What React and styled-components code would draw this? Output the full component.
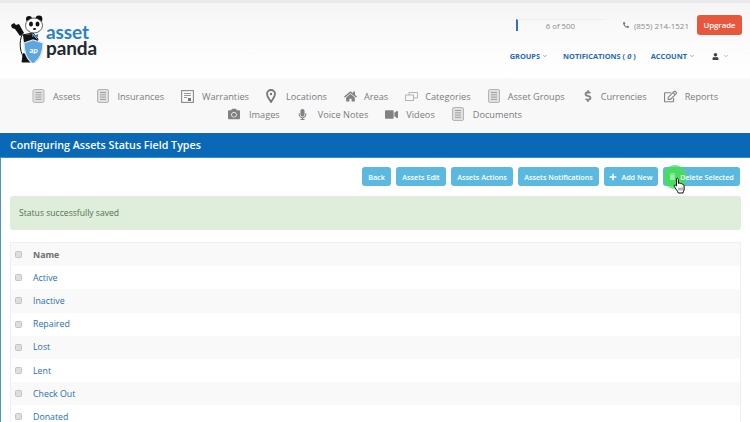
import React from 'react';
import styled, { createGlobalStyle } from 'styled-components';
import {
  FaCamera,
  FaDollarSign,
  FaHome,
  FaMicrophone,
  FaPhoneAlt,
  FaPlus,
  FaRegEdit,
  FaTrash,
  FaUser,
  FaVideo,
} from 'react-icons/fa';
import { FiChevronDown } from 'react-icons/fi';

const GlobalStyle = createGlobalStyle`
  html, body {
    margin: 0;
    height: 422px;
    overflow: hidden;
    background: #fff;
    font-family: "Open Sans", "Liberation Sans", sans-serif;
    color: #666;
  }
  * { box-sizing: border-box; }
`;

const Page = styled.div`
  width: 750px;
  height: 422px;
  overflow: hidden;
  display: flex;
  flex-direction: column;
`;

const TopStrip = styled.div`
  flex: none;
  height: 3px;
  background: #e9e9e9;
`;

const Header = styled.header`
  flex: none;
  height: 75px;
  display: flex;
  justify-content: space-between;
  padding: 12px 8px 0 10px;
  background: linear-gradient(#f5f5f6, #fdfdfd 70%, #fff);
`;

const Logo = styled.div`
  display: flex;
  align-items: flex-start;
`;

const LogoWords = styled.div`
  display: flex;
  flex-direction: column;
  margin: 9px 0 0 -5px;
  font-family: "Lato", "Open Sans", sans-serif;
  font-weight: 700;
  font-size: 19px;
  line-height: 16px;
  letter-spacing: -0.1px;
`;

const LogoWord = styled.div`
  height: 16px;
  color: ${p => p.$color};
`;

const HeaderRight = styled.div`
  display: flex;
  flex-direction: column;
  align-items: flex-end;
`;

const StatusRow = styled.div`
  display: flex;
  align-items: center;
  height: 20px;
`;

const Quota = styled.div`
  width: 90px;
  height: 12px;
  display: flex;
  justify-content: center;
  align-items: center;
  border-left: 2px solid #2a74b8;
  border-top: 1px solid #f0f0f0;
  font-size: 7.8px;
  color: #8a8a8a;
  padding-right: 3px;
`;

const Phone = styled.div`
  display: flex;
  align-items: center;
  gap: 5px;
  margin-left: 17px;
  font-size: 8px;
  color: #8a8a8a;
  svg { width: 6px; height: 6px; color: #777; }
`;

const UpgradeButton = styled.button`
  width: 45px;
  height: 20px;
  margin-left: 8px;
  padding: 0;
  border: 0;
  border-radius: 3px;
  background: #e8573c;
  color: #fff;
  font: 600 7.8px "Open Sans", sans-serif;
`;

const AccountRow = styled.nav`
  display: flex;
  align-items: center;
  height: 12px;
  margin-top: 15px;
  color: #1f6bb0;
  font-size: 7.4px;
  font-weight: 700;
`;

const AccountLink = styled.span`
  display: flex;
  align-items: center;
  gap: 2px;
  margin-left: ${p => p.$gap || 0}px;
  svg { width: 6px; height: 6px; }
`;

const UserMenu = styled.span`
  display: flex;
  align-items: center;
  gap: 4px;
  margin: 0 13px 0 17px;
  color: #444;
  svg { width: 7px; height: 7px; }
  svg + svg { width: 6px; height: 6px; color: #777; }
`;

const MainNav = styled.nav`
  flex: none;
  height: 54px;
  padding-top: 9px;
  background: #f8f8f9;
  display: flex;
  flex-direction: column;
  align-items: center;
`;

const NavRow = styled.div`
  display: flex;
  justify-content: center;
  gap: 17px;
  height: 18px;
`;

const NavItem = styled.a`
  display: flex;
  align-items: center;
  gap: ${p => p.$gap || 8}px;
  font-size: 9.2px;
  color: #7b7b7b;
  white-space: nowrap;
  svg { color: #828282; flex: none; }
`;

const TitleBar = styled.h1`
  flex: none;
  margin: 1px 0 0;
  height: 25px;
  padding: 0 10px;
  display: flex;
  align-items: center;
  background: #0a69b7;
  border-bottom: 1px solid #3d8ccc;
  color: #fff;
  font-size: 10.7px;
  font-weight: 600;
`;

const Content = styled.main`
  flex: 1;
  min-height: 0;
  overflow: hidden;
  padding: 9px 9px 0 9px;
  border-left: 1px solid #4f94c6;
  background: #fff;
`;

const Toolbar = styled.div`
  display: flex;
  justify-content: flex-end;
  gap: 5px;
  padding-right: 1px;
`;

const ActionWrap = styled.div`
  position: relative;
`;

const ActionButton = styled.button`
  height: 19px;
  width: ${p => p.$width}px;
  padding: 0;
  display: flex;
  align-items: center;
  justify-content: center;
  gap: 4px;
  border: 0;
  border-radius: 3px;
  background: #5bb9df;
  color: #fff;
  font: 600 7.2px "Open Sans", sans-serif;
  white-space: nowrap;
  svg { flex: none; position: relative; }
`;

const ClickGlow = styled.span`
  position: absolute;
  left: 0;
  top: -2px;
  width: 24px;
  height: 24px;
  border-radius: 50%;
  background: radial-gradient(circle, #46dc5e 45%, rgba(80, 220, 100, 0.6) 75%, rgba(80, 220, 100, 0) 100%);
`;

const Pointer = styled.svg`
  position: absolute;
  left: 10px;
  top: 10px;
`;

const ButtonLabel = styled.span`
  position: relative;
`;

const Alert = styled.div`
  height: 34px;
  margin-top: 10px;
  padding: 0 9px;
  display: flex;
  align-items: center;
  border-radius: 3px;
  background: #dfeeda;
  color: #4f7350;
  font-size: 8.6px;
`;

const Table = styled.div`
  margin-top: 12px;
  border: 1px solid #eeeeee;
  border-bottom: 0;
`;

const Row = styled.div`
  height: 23.2px;
  display: flex;
  align-items: center;
  gap: 11px;
  padding-left: 4px;
  background: ${p => (p.$shaded ? '#f9f9f9' : '#fff')};
  font-size: 8.8px;
`;

const Check = styled.span`
  width: 7px;
  height: 7px;
  border: 1px solid #c4c4c4;
  border-radius: 1.5px;
  background: #dedede;
  flex: none;
`;

const HeadCell = styled.span`
  font-weight: 700;
  color: #6e6e6e;
`;

const StatusLink = styled.a`
  color: #2a6eb0;
`;

function DocIcon({ width = 12 }) {
  return (
    <svg width={width} height="14" viewBox="0 0 12 14">
      <rect x="0.5" y="0.5" width="11" height="13" rx="1.5" fill="#e0e0e0" stroke="#b5b5b5" />
      <path d="M3 3.5h6M3 5.8h6M3 8.1h6M3 10.4h6" stroke="#a0a0a0" strokeWidth="1" />
    </svg>
  );
}

function WarrantyIcon() {
  return (
    <svg width="13" height="13" viewBox="0 0 13 13">
      <rect x="0.6" y="0.6" width="11.8" height="11.8" fill="#fafafa" stroke="#8a8a8a" strokeWidth="1.1" />
      <path d="M3 3.5h7M3 5.5h7M3 7.5h3" stroke="#999" strokeWidth="1" />
      <path d="M7 11v-3h3v3z" fill="#777" />
    </svg>
  );
}

function CategoryIcon() {
  return (
    <svg width="13" height="9" viewBox="0 0 13 9" fill="none" stroke="#b4b4b4">
      <rect x="0.5" y="3" width="8" height="5.5" />
      <path d="M4 3V0.5h8.5V6H8.5" />
    </svg>
  );
}

function PinIcon() {
  return (
    <svg width="10" height="14" viewBox="0 0 10 14">
      <path
        d="M5 13C3.5 10.4 1 7.8 1 5a4 4 0 0 1 8 0c0 2.8-2.5 5.4-4 8z"
        fill="none"
        stroke="#777"
        strokeWidth="1.8"
      />
      <circle cx="5" cy="5" r="1.2" fill="#777" />
    </svg>
  );
}

function PandaLogo() {
  return (
    <svg width="41" height="48" viewBox="0 0 41 48">
      {/* ears and body */}
      <circle cx="19" cy="4" r="3" fill="#111" />
      <circle cx="29" cy="4" r="3.4" fill="#111" />
      <path d="M12 20c-3 7-2 16 1 21l-1 6h9l2-5 5-18-5-6z" fill="#fff" stroke="#111" strokeWidth="1" />
      <path d="M13 20l9-1 6 6-2 5-7-4-5 2z" fill="#151515" />
      <path d="M1 10l3-2 2 2 3-1 5 9-4 3-5-7-3-1z" fill="#111" />
      <path d="M13 38l-1 9h8l2-6z" fill="#111" />
      {/* head */}
      <ellipse cx="24" cy="10.5" rx="8.5" ry="7.5" fill="#fff" stroke="#222" strokeWidth="0.7" />
      <ellipse cx="21" cy="9" rx="2" ry="2.6" fill="#111" />
      <ellipse cx="27.5" cy="9" rx="2" ry="2.6" fill="#111" />
      <ellipse cx="24.5" cy="14" rx="1.6" ry="1.1" fill="#111" />
      <path d="M22 19l3 1.5 3-1.5v3l-3-1-3 1z" fill="#2b7fc9" />
      {/* shield */}
      <path d="M14 28l9-3 10 3c0 9-2 16-10 21-7-5-9-12-9-21z" fill="#5ea6dd" stroke="#d7e7f3" strokeWidth="1.2" />
      <text x="23.5" y="38" textAnchor="middle" fontSize="8" fontWeight="700" fill="#fff" fontFamily="Lato, sans-serif">ap</text>
    </svg>
  );
}

const firstRow = [
  { label: 'Assets', icon: <DocIcon width={13} /> },
  { label: 'Insurances', icon: <DocIcon /> },
  { label: 'Warranties', icon: <WarrantyIcon /> },
  { label: 'Locations', icon: <PinIcon />, gap: 10 },
  { label: 'Areas', icon: <FaHome size={13} />, gap: 7 },
  { label: 'Categories', icon: <CategoryIcon />, gap: 7 },
  { label: 'Asset Groups', icon: <DocIcon />, gap: 8 },
  { label: 'Currencies', icon: <FaDollarSign size={12} />, gap: 7 },
  { label: 'Reports', icon: <FaRegEdit size={13} /> },
];

const secondRow = [
  { label: 'Images', icon: <FaCamera size={12} />, gap: 9 },
  { label: 'Voice Notes', icon: <FaMicrophone size={11} />, gap: 10 },
  { label: 'Videos', icon: <FaVideo size={13} /> },
  { label: 'Documents', icon: <DocIcon />, gap: 9 },
];

const statuses = ['Active', 'Inactive', 'Repaired', 'Lost', 'Lent', 'Check Out', 'Donated'];

export default function App() {
  return (
    <Page>
      <GlobalStyle />
      <TopStrip />
      <Header>
        <Logo>
          <PandaLogo />
          <LogoWords>
            <LogoWord $color="#2b7fc9">asset</LogoWord>
            <LogoWord $color="#23282d">panda</LogoWord>
          </LogoWords>
        </Logo>
        <HeaderRight>
          <StatusRow>
            <Quota>6 of 500</Quota>
            <Phone>
              <FaPhoneAlt />
              (855) 214-1521
            </Phone>
            <UpgradeButton>Upgrade</UpgradeButton>
          </StatusRow>
          <AccountRow>
            <AccountLink>
              GROUPS <FiChevronDown />
            </AccountLink>
            <AccountLink $gap={15}>
              NOTIFICATIONS ( <i>0</i> )
            </AccountLink>
            <AccountLink $gap={15}>
              ACCOUNT <FiChevronDown />
            </AccountLink>
            <UserMenu>
              <FaUser />
              <FiChevronDown />
            </UserMenu>
          </AccountRow>
        </HeaderRight>
      </Header>
      <MainNav>
        <NavRow>
          {firstRow.map(item => (
            <NavItem key={item.label} $gap={item.gap}>
              {item.icon}
              {item.label}
            </NavItem>
          ))}
        </NavRow>
        <NavRow>
          {secondRow.map(item => (
            <NavItem key={item.label} $gap={item.gap}>
              {item.icon}
              {item.label}
            </NavItem>
          ))}
        </NavRow>
      </MainNav>
      <TitleBar>Configuring Assets Status Field Types</TitleBar>
      <Content>
        <Toolbar>
          <ActionButton $width={29}>Back</ActionButton>
          <ActionButton $width={50}>Assets Edit</ActionButton>
          <ActionButton $width={62}>Assets Actions</ActionButton>
          <ActionButton $width={81}>Assets Notifications</ActionButton>
          <ActionButton $width={54}>
            <FaPlus size={8} />
            Add New
          </ActionButton>
          <ActionWrap>
            <ActionButton $width={77}>
              <ClickGlow />
              <FaTrash size={7} color="rgba(255, 255, 255, 0.45)" />
              <ButtonLabel>Delete Selected</ButtonLabel>
            </ActionButton>
            <Pointer width="13" height="17" viewBox="0 0 13 17">
              <path
                d="M3.4 1.6c.8-.8 1.8-.3 1.9.8l.2 4 .8-.2c.7-.2 1.2 0 1.4.5.7-.3 1.3-.1 1.6.5.8-.2 1.5.2 1.6 1l.4 3.2c.1 1.3-.3 2.4-1 3.4l-.3 1.2H5.2l-.4-1.2L1.3 9.5c-.5-.8.3-1.8 1.3-1.3l1 .7z"
                fill="#fff"
                stroke="#111"
                strokeWidth="1"
                strokeLinejoin="round"
              />
              <path d="M6 10.5v3M8 10.5v3M10 10.5v3" stroke="#333" strokeWidth="0.7" />
            </Pointer>
          </ActionWrap>
        </Toolbar>
        <Alert>Status successfully saved</Alert>
        <Table>
          <Row $shaded>
            <Check />
            <HeadCell>Name</HeadCell>
          </Row>
          {statuses.map((status, i) => (
            <Row key={status} $shaded={i % 2 === 1}>
              <Check />
              <StatusLink>{status}</StatusLink>
            </Row>
          ))}
        </Table>
      </Content>
    </Page>
  );
}
